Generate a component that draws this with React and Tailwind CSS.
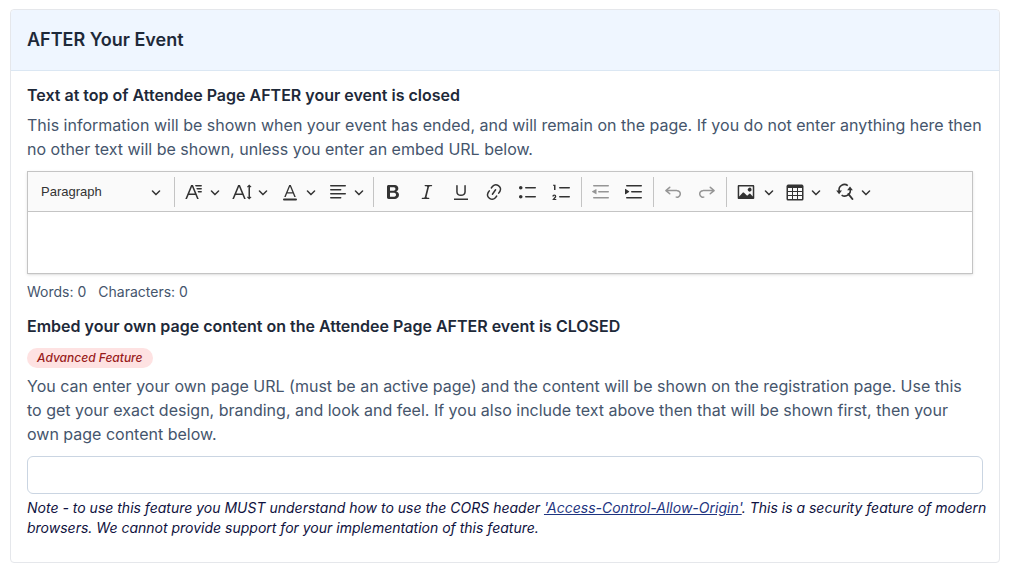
import React from 'react';

const PATHS = {
  fontFamily:
    'M11.03 3h6.149a.75.75 0 1 1 0 1.5h-5.514L11.03 3zm1.27 3h4.879a.75.75 0 1 1 0 1.5h-4.244L12.3 6zm1.27 3h3.609a.75.75 0 1 1 0 1.5h-2.973L13.57 9zm-2.754 2.5L8.038 4.785 5.261 11.5h5.555zm.62 1.5H4.641l-1.666 4.028H1.312l5.789-14h1.875l5.789 14h-1.663L11.436 13z',
  fontSize:
    'M9.816 11.5 7.038 4.785 4.261 11.5h5.555zm.62 1.5H3.641l-1.666 4.028H.312l5.789-14h1.875l5.789 14h-1.663L10.436 13zm7.55 2.279.779-.779.707.707-2.265 2.265-2.193-2.265.707-.707.765.765V4.825c0-.042 0-.083.002-.123l-.77.77-.707-.707L17.207 2.5l2.265 2.265-.707.707-.782-.782c.002.043.003.089.003.135v10.454z',
  fontColor:
    'M12.4 10.3 10 4.5l-2.4 5.8h4.8zm.5 1.2H7.1L5.7 15H4.2l5-12h1.6l5 12h-1.5l-1.4-3.5zm3.1 7H4a1 1 0 0 1 0-2h12a1 1 0 0 1 0 2z',
  alignLeft:
    'M2 3.75c0 .414.336.75.75.75h14.5a.75.75 0 1 0 0-1.5H2.75a.75.75 0 0 0-.75.75zm0 8c0 .414.336.75.75.75h14.5a.75.75 0 1 0 0-1.5H2.75a.75.75 0 0 0-.75.75zm0 4c0 .414.336.75.75.75h9.929a.75.75 0 1 0 0-1.5H2.75a.75.75 0 0 0-.75.75zm0-8c0 .414.336.75.75.75h9.929a.75.75 0 1 0 0-1.5H2.75a.75.75 0 0 0-.75.75z',
  bold:
    'M10.187 17H5.773c-.637 0-1.092-.138-1.364-.415-.273-.277-.409-.718-.409-1.323V4.738c0-.617.14-1.062.419-1.332.279-.27.73-.406 1.354-.406h4.68c.69 0 1.288.041 1.793.124.506.083.96.242 1.36.478.341.197.644.447.906.75a3.262 3.262 0 0 1 .808 2.162c0 1.401-.722 2.426-2.167 3.075C15.05 10.175 16 11.315 16 13.01a3.756 3.756 0 0 1-2.296 3.504 6.1 6.1 0 0 1-1.517.377c-.571.073-1.238.11-2 .11zm-.217-6.217H7v4.087h3.069c1.977 0 2.965-.69 2.965-2.072 0-.707-.256-1.22-.768-1.537-.512-.319-1.277-.478-2.296-.478zM7 5.13v3.619h2.606c.729 0 1.292-.067 1.69-.2a1.6 1.6 0 0 0 .91-.765c.165-.267.247-.566.247-.897 0-.707-.26-1.176-.778-1.409-.519-.232-1.31-.348-2.375-.348H7z',
  italic:
    'm9.586 14.633.021.004c-.036.335.095.655.393.962.082.083.173.15.274.201h1.474a.6.6 0 1 1 0 1.2H5.304a.6.6 0 0 1 0-1.2h1.15c.474-.07.809-.182 1.005-.334.157-.122.291-.32.404-.597l2.416-9.55a1.053 1.053 0 0 0-.281-.823 1.12 1.12 0 0 0-.442-.296H8.15a.6.6 0 0 1 0-1.2h6.443a.6.6 0 1 1 0 1.2h-1.195c-.376.056-.65.155-.823.296-.215.175-.423.439-.623.79l-2.366 9.347z',
  underline:
    'M3 18v-1.5h14V18H3zm2.2-8V3.6c0-.4.4-.6.8-.6.3 0 .7.2.7.6v6.2c0 2 1.3 2.8 3.2 2.8 1.9 0 3.4-.9 3.4-2.9V3.6c0-.3.4-.5.8-.5.3 0 .7.2.7.5V10c0 2.7-2.2 4-4.9 4-2.6 0-4.7-1.2-4.7-4z',
  link:
    'm11.077 15 .991-1.416a.75.75 0 1 1 1.229.86l-1.148 1.64a.748.748 0 0 1-.217.206 5.251 5.251 0 0 1-8.503-5.955.741.741 0 0 1 .12-.274l1.147-1.639a.75.75 0 1 1 1.228.86L4.933 10.7l.006.003a3.75 3.75 0 0 0 6.132 4.294l.006.004zm5.494-5.335a.748.748 0 0 1-.12.274l-1.147 1.639a.75.75 0 1 1-1.228-.86l.86-1.23a3.75 3.75 0 0 0-6.144-4.301l-.86 1.229a.75.75 0 0 1-1.229-.86l1.148-1.64a.748.748 0 0 1 .217-.206 5.251 5.251 0 0 1 8.503 5.955zm-4.563-2.532a.75.75 0 0 1 .184 1.045l-3.155 4.505a.75.75 0 1 1-1.229-.86l3.155-4.506a.75.75 0 0 1 1.045-.184z',
  bulleted:
    'M7 5.75c0 .414.336.75.75.75h9.5a.75.75 0 1 0 0-1.5h-9.5a.75.75 0 0 0-.75.75zm-6 0C1 4.784 1.777 4 2.75 4c.966 0 1.75.777 1.75 1.75 0 .966-.777 1.75-1.75 1.75C1.784 7.5 1 6.723 1 5.75zm6 9c0 .414.336.75.75.75h9.5a.75.75 0 1 0 0-1.5h-9.5a.75.75 0 0 0-.75.75zm-6 0c0-.966.777-1.75 1.75-1.75.966 0 1.75.777 1.75 1.75 0 .966-.777 1.75-1.75 1.75-.966 0-1.75-.777-1.75-1.75z',
  numbered:
    'M7 5.75c0 .414.336.75.75.75h9.5a.75.75 0 1 0 0-1.5h-9.5a.75.75 0 0 0-.75.75zM3.5 3v5H2V3.7H1v-1h2.5V3zM.343 17.857l2.59-3.257H2.92a.6.6 0 1 0-1.04 0H.302a2 2 0 1 1 3.995 0h-.001c-.048.405-.16.734-.333.988-.175.254-.59.692-1.244 1.312H4.3v1h-4l.043-.043zM7 14.75a.75.75 0 0 1 .75-.75h9.5a.75.75 0 1 1 0 1.5h-9.5a.75.75 0 0 1-.75-.75z',
  outdent:
    'M2 3.75c0 .414.336.75.75.75h14.5a.75.75 0 1 0 0-1.5H2.75a.75.75 0 0 0-.75.75zm5 6c0 .414.336.75.75.75h9.5a.75.75 0 1 0 0-1.5h-9.5a.75.75 0 0 0-.75.75zM2.75 16.5h14.5a.75.75 0 1 0 0-1.5H2.75a.75.75 0 1 0 0 1.5zM4.868 7.2 1.2 9.358a.4.4 0 0 0 .013.661l3.66 2.087a.4.4 0 0 0 .627-.334V7.525a.4.4 0 0 0-.632-.326z',
  indent:
    'M2 3.75c0 .414.336.75.75.75h14.5a.75.75 0 1 0 0-1.5H2.75a.75.75 0 0 0-.75.75zm5 6c0 .414.336.75.75.75h9.5a.75.75 0 1 0 0-1.5h-9.5a.75.75 0 0 0-.75.75zM2.75 16.5h14.5a.75.75 0 1 0 0-1.5H2.75a.75.75 0 1 0 0 1.5zM1.632 6.95 5.02 9.358a.4.4 0 0 1-.013.661l-3.39 2.207A.4.4 0 0 1 1 11.892V7.275a.4.4 0 0 1 .632-.326z',
  undo:
    'm5.042 9.367 2.189 1.837a.75.75 0 0 1-.965 1.149l-3.788-3.18a.747.747 0 0 1-.21-.284.75.75 0 0 1 .17-.945L6.23 4.762a.75.75 0 1 1 .964 1.15L4.863 7.866h8.917A.75.75 0 0 1 14 7.9a4 4 0 1 1-1.477 7.718l.344-1.489a2.5 2.5 0 1 0 1.094-4.73l.008-.032H5.042z',
  image:
    'M6.91 10.54c.26-.23.64-.21.88.03l3.36 3.14 2.23-2.06a.64.64 0 0 1 .87 0l2.52 2.97V4.5H3.2v10.12l3.71-4.08zm10.27-7.51c.6 0 1.09.47 1.09 1.05v11.84c0 .59-.49 1.06-1.09 1.06H2.79c-.6 0-1.09-.47-1.09-1.06V4.08c0-.58.49-1.05 1.1-1.05h14.38zm-5.22 5.56a1.96 1.96 0 1 1 3.4-1.96 1.96 1.96 0 0 1-3.4 1.96z',
  table:
    'M3 6v3h4V6H3zm0 4v3h4v-3H3zm0 4v3h4v-3H3zm5 3h4v-3H8v3zm5 0h4v-3h-4v3zm4-4v-3h-4v3h4zm0-4V6h-4v3h4zm1.5 8a1.5 1.5 0 0 1-1.5 1.5H3A1.5 1.5 0 0 1 1.5 17V4c.222-.863 1.068-1.5 2-1.5h13c.932 0 1.778.637 2 1.5v13zM12 13v-3H8v3h4zm0-4V6H8v3h4z',
};

function Icon({ name }) {
  if (name === 'findReplace') {
    return (
      <svg viewBox="0 0 20 20" className="size-5 shrink-0" aria-hidden="true">
        <g fill="none" stroke="currentColor" strokeWidth="1.6">
          <path d="M4.2 9.2A5.4 5.4 0 0 1 12.8 3.7" />
          <path d="M15 6.6a5.6 5.6 0 0 1-8.4 6.5" />
          <path d="m13.4 12 4 5" strokeWidth="2" strokeLinecap="round" />
        </g>
        <path fill="currentColor" d="M1.2 8.6h5.8l-2.9 3.6zM12.1 8.2 15 4.4l2.9 3.8z" />
      </svg>
    );
  }
  return (
    <svg viewBox="0 0 20 20" className="size-5 shrink-0" fill="currentColor" aria-hidden="true">
      {name === 'redo' ? (
        <path d={PATHS.undo} transform="translate(20 0) scale(-1 1)" />
      ) : (
        <path d={PATHS[name]} />
      )}
    </svg>
  );
}

function Chevron() {
  return (
    <svg viewBox="0 0 10 10" className="size-2.5 shrink-0" fill="currentColor" aria-hidden="true">
      <path d="M.941 4.523a.75.75 0 1 1 1.06-1.06l3.006 3.005 3.005-3.005a.75.75 0 1 1 1.06 1.06l-3.549 3.55a.75.75 0 0 1-1.168-.136L.941 4.523z" />
    </svg>
  );
}

function ToolButton({ icon, label, disabled }) {
  return (
    <button
      type="button"
      aria-label={label}
      disabled={disabled}
      className="flex h-[30px] flex-1 items-center justify-center disabled:opacity-50"
    >
      <Icon name={icon} />
    </button>
  );
}

function MenuButton({ icon, label, split }) {
  return (
    <button
      type="button"
      aria-label={label}
      aria-haspopup="menu"
      className={'flex h-[30px] flex-1 items-center pl-1.5 ' + (split ? 'gap-2' : 'gap-1.5')}
    >
      <Icon name={icon} />
      <Chevron />
    </button>
  );
}

function Toolbar() {
  const group = 'flex items-center border-l border-[#c4c4c4]';
  return (
    <div
      role="toolbar"
      aria-label="Editor toolbar"
      className="flex flex-wrap items-center border-b border-[#c4c4c4] bg-[#fafafa] py-1 text-[#333]"
    >
      <button
        type="button"
        aria-haspopup="listbox"
        className="flex h-[31px] w-[146px] items-center justify-between pr-[13px] pl-[13px] font-['Liberation_Sans',sans-serif] text-[13px]"
      >
        Paragraph
        <Chevron />
      </button>
      <div className={group + ' w-[199px] px-[3px]'}>
        <MenuButton icon="fontFamily" label="Font Family" />
        <MenuButton icon="fontSize" label="Font Size" />
        <MenuButton icon="fontColor" label="Font Color" />
        <MenuButton icon="alignLeft" label="Text alignment" />
      </div>
      <div className={group + ' w-[208px] px-0.5'}>
        <ToolButton icon="bold" label="Bold" />
        <ToolButton icon="italic" label="Italic" />
        <ToolButton icon="underline" label="Underline" />
        <ToolButton icon="link" label="Link" />
        <ToolButton icon="bulleted" label="Bulleted List" />
        <ToolButton icon="numbered" label="Numbered List" />
      </div>
      <div className={group + ' w-[72px] px-0.5'}>
        <ToolButton icon="outdent" label="Decrease indent" disabled />
        <ToolButton icon="indent" label="Increase indent" />
      </div>
      <div className={group + ' w-[73px] px-0.5'}>
        <ToolButton icon="undo" label="Undo" disabled />
        <ToolButton icon="redo" label="Redo" disabled />
      </div>
      <div className={group + ' w-[155px] px-[3px]'}>
        <MenuButton icon="image" label="Insert image" split />
        <MenuButton icon="table" label="Insert table" />
        <MenuButton icon="findReplace" label="Find and replace" />
      </div>
    </div>
  );
}

export default function App() {
  return (
    <main className="px-[10px] pt-[9px] pb-2 font-['Inter',sans-serif] text-base text-slate-600">
      <section className="mr-0.5 rounded border border-gray-200 bg-white">
        <header className="rounded-t border-b border-[#dbe7f3] bg-[#eff6ff] p-4">
          <h2 className="text-lg leading-7 font-semibold text-gray-800">AFTER Your Event</h2>
        </header>
        <div className="px-4 pt-3 pb-6">
          <h3 id="after-text" className="font-semibold text-gray-800">
            Text at top of Attendee Page AFTER your event is closed
          </h3>
          <p className="mt-1.5">
            This information will be shown when your event has ended, and will remain on the page. If
            you do not enter anything here then no other text will be shown, unless you enter an embed
            URL below.
          </p>
          <div className="mt-2.5 mr-2.5 border border-[#c4c4c4] shadow-sm">
            <Toolbar />
            <textarea
              aria-labelledby="after-text"
              className="block h-[61px] w-full resize-none px-2.5 py-2 outline-none"
            />
          </div>
          <div className="mt-2 flex gap-3 text-sm">
            <span>Words: 0</span>
            <span>Characters: 0</span>
          </div>
          <h3 className="mt-3 font-semibold text-gray-800">
            <label htmlFor="embed-url">
              Embed your own page content on the Attendee Page AFTER event is CLOSED
            </label>
          </h3>
          <div className="mt-2.5 flex">
            <span className="rounded-full bg-[#fee2e2] px-2.5 text-xs leading-5 font-medium text-[#991b1b] italic">
              Advanced Feature
            </span>
          </div>
          <p className="mt-1.5 pr-3">
            You can enter your own page URL (must be an active page) and the content will be shown on
            the registration page. Use this to get your exact design, branding, and look and feel. If
            you also include text above then that will be shown first, then your own page content
            below.
          </p>
          <input
            id="embed-url"
            type="url"
            className="mt-2.5 block h-[38px] w-full rounded-md border border-slate-300 px-3"
          />
          <p className="mt-1 -mr-2 text-sm text-[#0f1240] italic">
            Note - to use this feature you MUST understand how to use the CORS header{' '}
            <a href="#cors" className="text-[#1e3480] underline">
              'Access-Control-Allow-Origin'
            </a>
            . This is a security feature of modern browsers. We cannot provide support for your
            implementation of this feature.
          </p>
        </div>
      </section>
    </main>
  );
}
